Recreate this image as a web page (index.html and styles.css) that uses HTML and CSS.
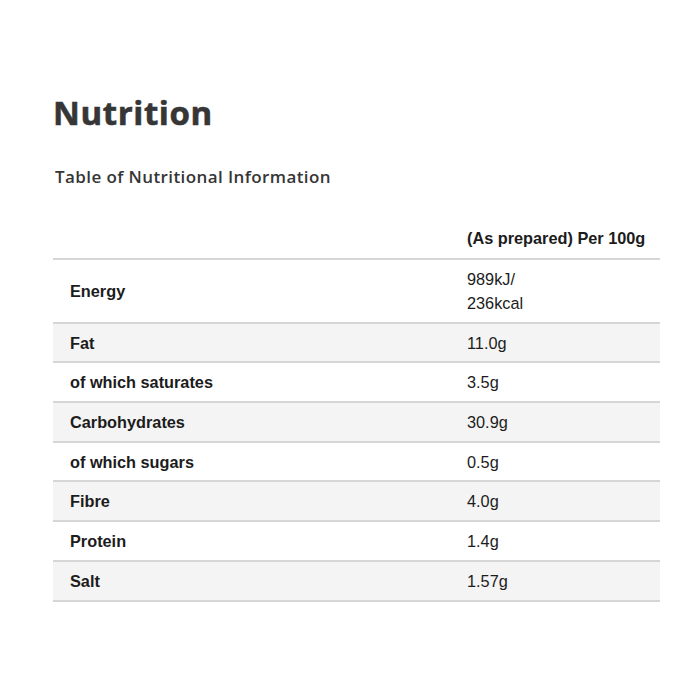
FILE: index.html
```html
<!DOCTYPE html>
<html lang="en">
<head>
<meta charset="utf-8">
<title>Nutrition</title>
<link rel="stylesheet" href="styles.css">
</head>
<body>
<main class="page">
  <h1 class="title">Nutrition</h1>
  <h2 class="subtitle">Table of Nutritional Information</h2>
  <table class="nutri">
    <thead>
      <tr><th class="label"></th><th class="value">(As prepared) Per 100g</th></tr>
    </thead>
    <tbody>
      <tr><th class="label">Energy</th><td class="value">989kJ/<br>236kcal</td></tr>
      <tr class="alt"><th class="label">Fat</th><td class="value">11.0g</td></tr>
      <tr><th class="label">of which saturates</th><td class="value">3.5g</td></tr>
      <tr class="alt"><th class="label">Carbohydrates</th><td class="value">30.9g</td></tr>
      <tr><th class="label">of which sugars</th><td class="value">0.5g</td></tr>
      <tr class="alt"><th class="label">Fibre</th><td class="value">4.0g</td></tr>
      <tr><th class="label">Protein</th><td class="value">1.4g</td></tr>
      <tr class="alt"><th class="label">Salt</th><td class="value">1.57g</td></tr>
    </tbody>
  </table>
</main>
</body>
</html>
```
FILE: styles.css
```css
html, body {
  margin: 0;
  padding: 0;
  background: #ffffff;
}

.page {
  padding: 93px 40px 0 53px;
}

.title {
  margin: 0;
  font-family: "Open Sans", sans-serif;
  font-weight: 700;
  font-size: 33px;
  line-height: 40px;
  color: #363636;
  letter-spacing: 0.6px;
  -webkit-text-stroke: 0.6px #363636;
}

.subtitle {
  margin: 32px 0 0 2px;
  font-family: "Open Sans", sans-serif;
  font-weight: 600;
  font-size: 17px;
  line-height: 24px;
  color: #363636;
  letter-spacing: 0.4px;
}

.nutri {
  margin-top: 30px;
  width: 607px;
  border-collapse: collapse;
  font-family: "Liberation Sans", Arial, sans-serif;
  font-size: 16.3px;
  line-height: 24px;
  color: #1c1c1c;
}

.nutri th,
.nutri td {
  text-align: left;
  vertical-align: middle;
  padding: 6.85px 0 6.85px 17px;
}

.nutri th {
  font-weight: 700;
}

.nutri td {
  font-weight: 400;
}

.nutri .label {
  width: 380px;
}

.nutri thead th {
  padding-top: 7px;
  padding-bottom: 8px;
  border-bottom: 2px solid #d6d6d6;
}

.nutri tbody tr {
  border-bottom: 2px solid #d6d6d6;
}

.nutri tbody tr.alt {
  background: #f4f4f4;
}
```
